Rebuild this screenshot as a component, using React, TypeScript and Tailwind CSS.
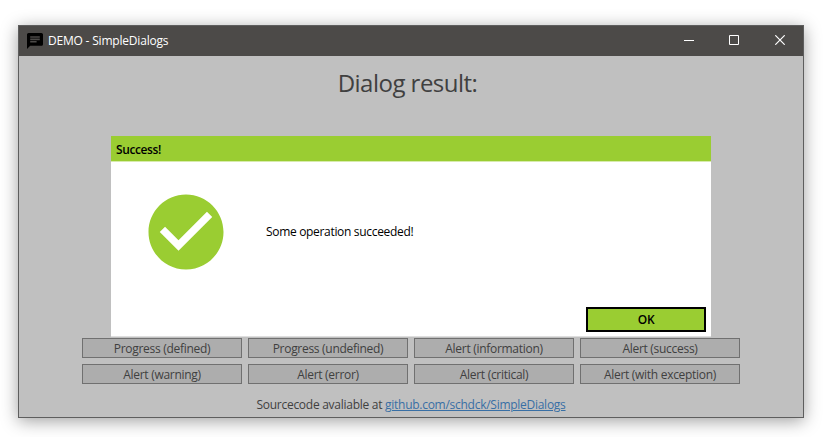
import React from "react";

const actions = [
  "Progress (defined)",
  "Progress (undefined)",
  "Alert (information)",
  "Alert (success)",
  "Alert (warning)",
  "Alert (error)",
  "Alert (critical)",
  "Alert (with exception)",
];

function TitleBar() {
  return (
    <header className="flex h-[30px] shrink-0 items-center bg-[#4c4a48] text-white">
      <svg className="mb-px ml-[8px] size-4" viewBox="2 2 20 20">
        <path d="M4 6h16v9H4z" fill="#4c4a48" />
        <path fill="#000" d="M20 2H4c-1.1 0-1.99.9-1.99 2L2 22l4-4h14c1.1 0 2-.9 2-2V4c0-1.1-.9-2-2-2zM6 9h12v2H6V9zm8 5H6v-2h8v2zm4-6H6V6h12v2z" />
      </svg>
      <h1 className="ml-[5px] text-[12px] leading-4 tracking-[-0.2px]">DEMO - SimpleDialogs</h1>
      <div className="ml-auto flex h-full pb-[2px]">
        <button aria-label="Minimize" className="flex w-[46px] items-center justify-center">
          <svg width="10" height="10" shapeRendering="crispEdges"><path d="M0 5h10v1H0z" fill="#fff" /></svg>
        </button>
        <button aria-label="Maximize" className="flex w-[44px] items-center justify-center">
          <svg width="10" height="10"><path d="M.5.5h9v9h-9z" fill="none" stroke="#fff" /></svg>
        </button>
        <button aria-label="Close" className="ml-px flex w-[46px] items-center justify-center">
          <svg width="10" height="10"><path d="M.3.3l9.4 9.4M9.7.3L.3 9.7" fill="none" stroke="#fff" strokeWidth="1.2" /></svg>
        </button>
      </div>
    </header>
  );
}

function SuccessDialog() {
  return (
    <section role="dialog" className="absolute top-[110px] left-[92px] flex h-[200px] w-[600px] flex-col bg-white text-black shadow-[0_1px_0_#dedede]">
      <h3 className="flex h-[25px] shrink-0 items-center bg-[#9acd32] pt-[2px] pl-[5px] text-[12px] font-semibold tracking-[-0.4px] shadow-[0_1px_0_#d7ebad]">Success!</h3>
      <div className="flex flex-1 items-start pt-[26px] pl-[30px]">
        <svg className="size-[90px]" viewBox="0 0 24 24" fill="#9acd32">
          <path d="M12 2C6.48 2 2 6.48 2 12s4.48 10 10 10 10-4.48 10-10S17.52 2 12 2zm-2 15l-5-5 1.41-1.41L10 14.17l7.59-7.59L19 8l-9 9z" />
        </svg>
        <p className="ml-[35px] pt-[37px] text-[12px] leading-4 tracking-[-0.32px]">Some operation succeeded!</p>
      </div>
      <button className="mr-[5px] mb-[4px] flex h-[25px] w-[120px] items-center justify-center self-end border-2 border-black bg-[#9acd32] text-[12px] font-semibold tracking-[-0.3px]">OK</button>
    </section>
  );
}

export default function App() {
  return (
    <main className="h-[437px] w-[824px] overflow-hidden bg-white pt-[25px] pl-[18px] font-['Open_Sans','Noto_Sans',sans-serif]">
      <div className="relative flex h-[393px] w-[786px] flex-col border border-[#5e5e5e] bg-[#c0c0c0] text-[#404040] shadow-[0_3px_16px_rgba(0,0,0,0.38)]">
        <TitleBar />
        <h2 className="mt-[11px] text-center text-[24px] leading-8 tracking-[-0.52px]"><span className="mr-[7px]">Dialog result:</span></h2>
        <div className="mt-[239px] ml-[63px] grid w-[658px] shrink-0 grid-cols-4 gap-[6px]">
          {actions.map((label) => (
            <button key={label} className="h-5 border border-[#707070] bg-[#adadad] pt-px text-[12px] leading-[18px] tracking-[-0.29px]">{label}</button>
          ))}
        </div>
        <p className="mt-[13px] text-center text-[12px] leading-4 tracking-[-0.27px]">
          Sourcecode avaliable at <a className="text-[#386fa5] underline" href="#">github.com/schdck/SimpleDialogs</a>
        </p>
        <SuccessDialog />
      </div>
    </main>
  );
}
